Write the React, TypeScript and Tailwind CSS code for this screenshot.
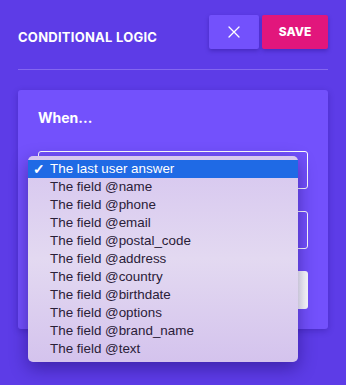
import React from "react";

const options = [
  "The last user answer",
  "The field @name",
  "The field @phone",
  "The field @email",
  "The field @postal_code",
  "The field @address",
  "The field @country",
  "The field @birthdate",
  "The field @options",
  "The field @brand_name",
  "The field @text",
];

export default function App() {
  return (
    <div
      className="w-[346px] h-[385px] bg-[#5d3ce7] px-[18px] pt-[15px] overflow-hidden"
      style={{ fontFamily: "Inter, 'Noto Sans', sans-serif" }}
    >
      <div className="flex justify-between items-start">
        <div className="mt-[14px] text-[13px] leading-[16px] font-bold text-white tracking-[0.25px]">
          CONDITIONAL LOGIC
        </div>
        <div className="flex gap-[3px]">
          <button className="w-[50px] h-[34px] bg-[#7351fc] rounded-[2px] shadow-[0_2px_4px_rgba(30,10,120,0.35)] flex items-center justify-center">
            <svg width="12" height="12" viewBox="0 0 12 12">
              <path d="M1 1L11 11M11 1L1 11" stroke="white" strokeWidth="1.3" strokeLinecap="round" />
            </svg>
          </button>
          <button className="w-[66px] h-[34px] bg-[#e2167c] rounded-[2px] shadow-[0_2px_4px_rgba(30,10,120,0.35)] text-white text-[12px] font-extrabold flex items-center justify-center">
            SAVE
          </button>
        </div>
      </div>
      <div className="mt-[20px] h-px bg-[#8466f0]" />
      <div className="mt-[20px] bg-[#7351fc] rounded-[3px] px-[20px] pt-[18px] pb-[20px] shadow-[0_2px_6px_rgba(30,10,120,0.3)]">
        <div className="text-[14px] leading-[20px] font-bold text-white">When...</div>
        <div className="relative mt-[23px]">
          <div className="h-[38px] border border-white rounded-[3px]" />
          <div className="mt-[22px] h-[38px] border border-white rounded-[3px]" />
          <div className="mt-[22px] h-[38px] bg-gradient-to-r from-[#ececec] to-white rounded-[3px]" />
          <div
            className="absolute left-[-10px] top-[5px] w-[270px] rounded-[5px] py-[4px] bg-gradient-to-b from-[#d6c6ef] via-[#e3d9f1] to-[#d4c3ed] shadow-[0_6px_18px_rgba(20,5,90,0.45)]"
            style={{ fontFamily: "'Liberation Sans', Arial, sans-serif" }}
          >
            {options.map((o, i) => (
              <div
                key={o}
                className={
                  i === 0
                    ? "h-[18px] flex items-center bg-[#1f6ae5] text-white text-[13.4px]"
                    : "h-[18px] flex items-center text-[#2a2038] text-[13.4px]"
                }
              >
                <span className="w-[22px] pl-[5px] text-[14px] font-bold">{i === 0 ? "✓" : ""}</span>
                <span>{o}</span>
              </div>
            ))}
          </div>
        </div>
      </div>
    </div>
  );
}
